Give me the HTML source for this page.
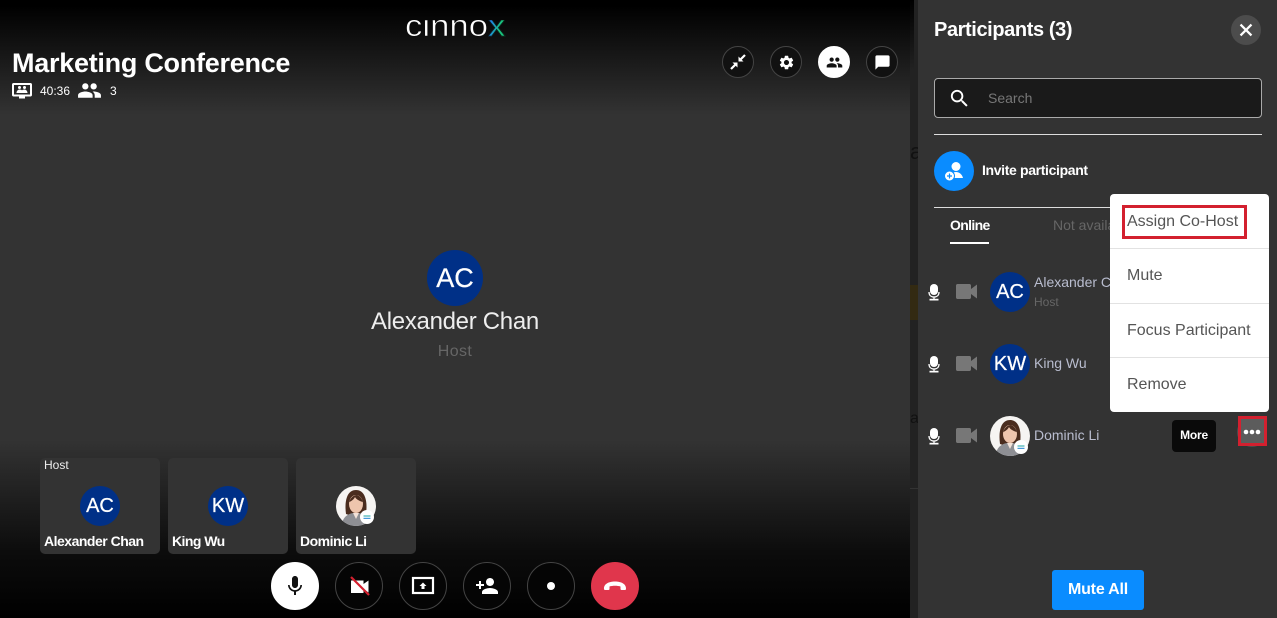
<!DOCTYPE html>
<html lang="en"><head><meta charset="utf-8"><title>Marketing Conference</title>
<style>
*{box-sizing:border-box}
html,body{margin:0;padding:0;width:1277px;height:618px;overflow:hidden;background:#333;font-family:"Liberation Sans",sans-serif}
.a{position:absolute}
.t{position:absolute;white-space:nowrap;line-height:1}
#stage{position:absolute;left:0;top:0;width:910px;height:618px;background:linear-gradient(to bottom,#000 0,#000 6px,#333 115px,#333 440px,#0c0c0c 552px,#000 618px)}
.c{position:absolute;border-radius:50%;display:flex;align-items:center;justify-content:center}
.top{width:32px;height:32px;top:46px;background:#111;border:1px solid #444}
.bot{width:48px;height:48px;top:562px;background:#050505;border:1px solid #444}
.av{background:#003087;color:#fff;width:40px;height:40px;font-size:20px;-webkit-text-stroke:.25px #fff}
.thumb{position:absolute;top:458px;width:120px;height:96px;background:#333;border-radius:5px}
.row{color:#b9bdcf;font-size:14px}
.menu{position:absolute;left:1110px;top:194px;width:159px;height:218px;background:#fff;border-radius:4px}
.menu i{position:absolute;left:0;width:100%;height:1px;background:#e2e2e2}
.menu span{position:absolute;left:17px;font-size:16px;line-height:1;color:#555;white-space:nowrap}
svg{display:block}
</style></head><body>
<div id="stage"></div>
<div class="a" style="left:910px;top:0;width:8px;height:618px;background:#222"></div>
<div class="a" style="left:910px;top:0;width:4px;height:70px;background:linear-gradient(to bottom,#000,#222)"></div>
<div class="a" style="left:910px;top:143px;width:8px;height:18px;color:#111;font-size:22px;line-height:18px;overflow:hidden">a</div>
<div class="a" style="left:910px;top:285px;width:8px;height:35px;background:#332a12"></div>
<div class="a" style="left:910px;top:411px;width:8px;height:16px;color:#111;font-size:16px;line-height:16px;overflow:hidden">a</div>
<div class="a" style="left:910px;top:488px;width:8px;height:1px;background:#333"></div>

<!-- logo -->
<div class="a" style="left:405px;top:20px;width:104px;height:18px;overflow:hidden">
<div class="t" style="left:0;top:-10px;font-size:31px;line-height:31px;color:#fff;-webkit-text-stroke:.6px #0c0c0c;transform:scaleX(1.12);transform-origin:0 0">cinno<span style="background:linear-gradient(100deg,#1e88e5 25%,#19c37d 65%);-webkit-background-clip:text;background-clip:text;color:transparent">x</span></div>
</div>

<div class="t" style="left:12px;top:47px;font-size:27px;line-height:32px;font-weight:700;color:#fff;letter-spacing:-.27px">Marketing Conference</div>

<svg class="a" style="left:12px;top:83px" width="20" height="16" viewBox="0 0 20 16"><path d="M1.500 0h17c.8 0 1.500.7 1.500 1.500v10.500c0 .8-.7 1.500-1.500 1.500H13v2H7v-2H1.500C.7 13.500 0 12.800 0 12V1.500C0 .7.700 0 1.500 0zM2 2v9.500h16V2z" fill="#fff"/><circle cx="7.500" cy="4.500" r="1.500" fill="#fff"/><circle cx="12.500" cy="4.500" r="1.500" fill="#fff"/><path d="M4.500 10c0-2 1.500-3.500 3-3.500 1 0 2 .4 2.500.9.500-.5 1.500-.9 2.500-.9 1.500 0 3 1.500 3 3.500z" fill="#fff"/></svg>
<div class="t" style="left:40px;top:85px;font-size:12px;color:#fff">40:36</div>
<svg class="a" style="left:77px;top:78px" width="25" height="25" viewBox="0 0 24 24"><path fill="#fff" d="M16 11c1.660 0 2.990-1.340 2.990-3S17.660 5 16 5c-1.660 0-3 1.340-3 3s1.340 3 3 3zm-8 0c1.660 0 2.990-1.340 2.990-3S9.660 5 8 5C6.340 5 5 6.340 5 8s1.340 3 3 3zm0 2c-2.330 0-7 1.170-7 3.500V19h14v-2.500c0-2.330-4.670-3.500-7-3.500zm8 0c-.290 0-.620.020-.970.050 1.160.840 1.970 1.970 1.970 3.450V19h6v-2.500c0-2.330-4.670-3.500-7-3.500z"/></svg>
<div class="t" style="left:110px;top:85px;font-size:12px;color:#fff">3</div>

<!-- top buttons -->
<div class="c top" style="left:722px"><svg width="18" height="18" viewBox="0 0 18 18"><path d="M16 2L11 7M2 16l5-5" stroke="#fff" stroke-width="2.200" fill="none"/><path fill="#fff" d="M9.500 8.500V3.500l5 5zM8.500 9.500v5l-5-5z"/></svg></div>
<div class="c top" style="left:770px"><svg width="17" height="17" viewBox="0 0 24 24"><path fill="#fff" d="M19.140 12.940c.040-.300.060-.610.060-.940 0-.320-.020-.640-.070-.940l2.030-1.580c.180-.140.230-.410.120-.610l-1.920-3.320c-.120-.220-.370-.290-.590-.220l-2.390.960c-.500-.380-1.030-.700-1.620-.940l-.360-2.540c-.040-.240-.240-.410-.480-.410h-3.840c-.240 0-.430.170-.470.410l-.360 2.540c-.590.240-1.130.570-1.620.940l-2.390-.960c-.220-.080-.470 0-.590.220L2.740 8.870c-.120.210-.080.470.120.610l2.030 1.580c-.050.300-.090.630-.090.940s.020.640.070.940l-2.030 1.580c-.180.140-.230.410-.120.610l1.920 3.320c.120.220.370.290.590.220l2.390-.960c.500.380 1.030.700 1.620.940l.360 2.540c.050.240.240.410.480.410h3.840c.240 0 .440-.170.470-.410l.360-2.540c.590-.240 1.130-.560 1.620-.940l2.390.960c.220.080.470 0 .590-.220l1.920-3.320c.120-.220.070-.470-.120-.610l-2.010-1.580zM12 15.600c-1.980 0-3.600-1.620-3.600-3.600s1.620-3.600 3.600-3.600 3.600 1.620 3.600 3.600-1.620 3.600-3.600 3.600z"/></svg></div>
<div class="c top" style="left:818px;background:#fff;border-color:#fff"><svg width="17" height="17" viewBox="0 0 24 24"><path fill="#111" d="M16 11c1.660 0 2.990-1.340 2.990-3S17.660 5 16 5c-1.660 0-3 1.340-3 3s1.340 3 3 3zm-8 0c1.660 0 2.990-1.340 2.990-3S9.660 5 8 5C6.340 5 5 6.340 5 8s1.340 3 3 3zm0 2c-2.330 0-7 1.170-7 3.500V19h14v-2.500c0-2.330-4.670-3.500-7-3.500zm8 0c-.290 0-.620.020-.970.050 1.160.840 1.970 1.970 1.970 3.450V19h6v-2.500c0-2.330-4.670-3.500-7-3.500z"/></svg></div>
<div class="c top" style="left:866px"><svg width="17" height="17" viewBox="0 0 24 24"><path fill="#fff" d="M20 2H4c-1.100 0-2 .9-2 2v18l4-4h14c1.100 0 2-.9 2-2V4c0-1.100-.9-2-2-2z"/></svg></div>

<!-- centre -->
<div class="c av" style="left:427px;top:250px;width:56px;height:56px;font-size:27px">AC</div>
<div class="t" style="left:255px;width:400px;text-align:center;top:310px;font-size:24px;color:#eee;letter-spacing:-.3px">Alexander Chan</div>
<div class="t" style="left:255px;width:400px;text-align:center;top:344px;font-size:16px;color:#666;letter-spacing:.4px">Host</div>

<!-- thumbs -->
<div class="thumb" style="left:40px"></div><div class="thumb" style="left:168px"></div><div class="thumb" style="left:296px"></div>
<div class="t" style="left:44px;top:459px;font-size:12px;color:#eee">Host</div>
<div class="c av" style="left:80px;top:486px">AC</div>
<div class="c av" style="left:208px;top:486px">KW</div>
<svg class="a" style="left:336px;top:486px" width="40" height="40" viewBox="0 0 40 40"><defs><clipPath id="p1"><circle cx="20" cy="20" r="20"/></clipPath></defs><g clip-path="url(#p1)"><rect width="40" height="40" fill="#f6f4f2"/><path d="M10 28C8 13 12 4 20 4s12 9 10 24l-4 1H13z" fill="#4a2c1e"/><ellipse cx="20" cy="18" rx="7" ry="9" fill="#eec5ad"/><path d="M13 16c2-5 5-7 8-7 3 1 5 4 6 7-4-1-7-3-8-5-1 2-3 4-6 5z" fill="#4a2c1e"/><path d="M6 40c0-8 5-12 11-13l3 4 3-4c6 1 11 5 11 13z" fill="#8e8f94"/><path d="M17 27l3 6 3-6z" fill="#f3e2d8"/></g><circle cx="31" cy="31" r="7" fill="#fff"/><rect x="27.500" y="29.500" width="7" height="1" fill="#1aa3a0"/><rect x="27.500" y="31.800" width="7" height="1" fill="#1a7fd0"/></svg>
<div class="t" style="left:44px;top:534px;font-size:14px;font-weight:700;color:#fff;letter-spacing:-.5px">Alexander Chan</div>
<div class="t" style="left:172px;top:534px;font-size:14px;font-weight:700;color:#fff;letter-spacing:-.55px">King Wu</div>
<div class="t" style="left:300px;top:534px;font-size:14px;font-weight:700;color:#fff;letter-spacing:-.5px">Dominic Li</div>

<!-- bottom buttons -->
<div class="c bot" style="left:271px;background:#fff;border-color:#fff"><svg width="24" height="24" viewBox="0 0 24 24"><path fill="#111" d="M12 14c1.660 0 2.990-1.340 2.990-3L15 5c0-1.660-1.340-3-3-3S9 3.340 9 5v6c0 1.660 1.340 3 3 3zm5.300-3c0 3-2.540 5.100-5.300 5.100S6.700 14 6.700 11H5c0 3.410 2.720 6.230 6 6.720V21h2v-3.280c3.280-.480 6-3.300 6-6.720h-1.700z"/></svg></div>
<div class="c bot" style="left:335px"><svg width="24" height="24" viewBox="0 0 24 24"><path fill="#fff" d="M4 6.500h12.500v3.500l5-3.500v12l-5-3.500v4H4z"/><path d="M4 3l18 18" stroke="#d3202f" stroke-width="2.200"/></svg></div>
<div class="c bot" style="left:399px"><svg width="24" height="24" viewBox="0 0 24 24"><rect x="2" y="4" width="20" height="15" fill="none" stroke="#fff" stroke-width="2.200"/><path fill="#fff" d="M12 8.500l3.500 3.500h-2v3h-3v-3h-2z"/></svg></div>
<div class="c bot" style="left:463px"><svg width="24" height="24" viewBox="0 0 24 24"><path fill="#fff" d="M15 12c2.210 0 4-1.790 4-4s-1.790-4-4-4-4 1.790-4 4 1.790 4 4 4zm-9-2V7H4v3H1v2h3v3h2v-3h3v-2H6zm9 4c-2.670 0-8 1.340-8 4v2h16v-2c0-2.660-5.330-4-8-4z"/></svg></div>
<div class="c bot" style="left:527px"><div style="width:8px;height:8px;border-radius:50%;background:#fff"></div></div>
<div class="c bot" style="left:591px;background:#e0364c;border-color:#e0364c"><svg width="24" height="24" viewBox="0 0 24 24"><path fill="#fff" d="M1 15c-.5-5 5-7.500 11-7.500S23.500 10 23 15c0 .5-.5 1-1 1h-3.500c-.5 0-1-.5-1-1v-2.500c-3-1-8-1-11 0V15c0 .5-.5 1-1 1H2c-.5 0-1-.5-1-1z"/></svg></div>

<!-- panel -->
<div class="a" style="left:918px;top:0;width:359px;height:618px;background:#333"></div>
<div class="t" style="left:934px;top:20px;font-size:20px;line-height:20px;font-weight:700;color:#fff;letter-spacing:-.4px">Participants (3)</div>
<div class="c" style="left:1231px;top:15px;width:30px;height:30px;background:#4c4c4c"><svg width="20" height="20" viewBox="0 0 24 24"><path fill="#fff" stroke="#fff" stroke-width=".7" d="M19 6.410L17.590 5 12 10.590 6.410 5 5 6.410 10.590 12 5 17.590 6.410 19 12 13.410 17.590 19 19 17.590 13.410 12 19 6.410z"/></svg></div>
<div class="a" style="left:934px;top:78px;width:328px;height:40px;background:#1a1a1a;border:1px solid #aaa;border-radius:4px"></div>
<svg class="a" style="left:948px;top:87px" width="23" height="23" viewBox="0 0 24 24"><path fill="#fff" d="M15.500 14h-.790l-.280-.270C15.410 12.590 16 11.110 16 9.500 16 5.910 13.090 3 9.500 3S3 5.910 3 9.500 5.910 16 9.500 16c1.610 0 3.090-.590 4.230-1.570l.270.280v.790l5 4.990L20.490 19l-4.990-5zm-6 0C7.010 14 5 11.990 5 9.500S7.010 5 9.500 5 14 7.010 14 9.500 11.990 14 9.500 14z"/></svg>
<div class="t" style="left:988px;top:91px;font-size:14px;color:#777">Search</div>
<div class="a" style="left:934px;top:134px;width:328px;height:1px;background:#ddd"></div>
<div class="c" style="left:934px;top:151px;width:40px;height:40px;background:#0a8cff"><svg width="26" height="26" viewBox="0 0 26 26"><circle cx="15" cy="8.500" r="4.500" fill="#fff"/><path d="M9 20c0-4 3-6 6-6s6 2 7 6z" fill="#fff"/><circle cx="8.500" cy="18" r="5" fill="#fff" stroke="#0a8cff" stroke-width="1"/><path d="M8.500 15.500v5M6 18h5" stroke="#0a8cff" stroke-width="1.200"/></svg></div>
<div class="t" style="left:982px;top:163px;font-size:14px;font-weight:700;color:#fff;letter-spacing:-.35px">Invite participant</div>
<div class="a" style="left:934px;top:207px;width:328px;height:1px;background:#ddd"></div>
<div class="t" style="left:950px;top:218px;font-size:14px;font-weight:700;color:#fff;letter-spacing:-.65px">Online</div>
<div class="a" style="left:950px;top:242px;width:39px;height:2px;background:#fff"></div>
<div class="t" style="left:1053px;top:218px;font-size:14px;color:#666">Not available</div>

<!-- rows -->
<svg class="a" style="left:925px;top:284px" width="18" height="18" viewBox="0 0 18 18"><rect x="5" y="0" width="8" height="11" rx="4" fill="#fff"/><path d="M4 8c0 3.500 2.200 5 5 5s5-1.500 5-5M9 13v2.500" fill="none" stroke="#fff" stroke-width="1.300"/><rect x="4.500" y="14.800" width="9" height="1.700" fill="#fff"/></svg>
<svg class="a" style="left:925px;top:356px" width="18" height="18" viewBox="0 0 18 18"><rect x="5" y="0" width="8" height="11" rx="4" fill="#fff"/><path d="M4 8c0 3.500 2.200 5 5 5s5-1.500 5-5M9 13v2.500" fill="none" stroke="#fff" stroke-width="1.300"/><rect x="4.500" y="14.800" width="9" height="1.700" fill="#fff"/></svg>
<svg class="a" style="left:925px;top:428px" width="18" height="18" viewBox="0 0 18 18"><rect x="5" y="0" width="8" height="11" rx="4" fill="#fff"/><path d="M4 8c0 3.500 2.200 5 5 5s5-1.500 5-5M9 13v2.500" fill="none" stroke="#fff" stroke-width="1.300"/><rect x="4.500" y="14.800" width="9" height="1.700" fill="#fff"/></svg>
<svg class="a" style="left:956px;top:284px" width="21" height="15" viewBox="0 0 21 15"><path fill="#777" d="M1.500 0h12c.8 0 1.500.7 1.500 1.500V5l6-4.500v14L15 10v3.500c0 .8-.7 1.500-1.500 1.500h-12C.7 15 0 14.300 0 13.500v-12C0 .7.700 0 1.500 0z"/></svg>
<svg class="a" style="left:956px;top:356px" width="21" height="15" viewBox="0 0 21 15"><path fill="#777" d="M1.500 0h12c.8 0 1.500.7 1.500 1.500V5l6-4.500v14L15 10v3.500c0 .8-.7 1.500-1.500 1.500h-12C.7 15 0 14.300 0 13.500v-12C0 .7.700 0 1.500 0z"/></svg>
<svg class="a" style="left:956px;top:428px" width="21" height="15" viewBox="0 0 21 15"><path fill="#777" d="M1.500 0h12c.8 0 1.500.7 1.500 1.500V5l6-4.500v14L15 10v3.500c0 .8-.7 1.500-1.500 1.500h-12C.7 15 0 14.300 0 13.500v-12C0 .7.700 0 1.500 0z"/></svg>
<div class="c av" style="left:990px;top:272px">AC</div>
<div class="c av" style="left:990px;top:344px">KW</div>
<svg class="a" style="left:990px;top:416px" width="40" height="40" viewBox="0 0 40 40"><defs><clipPath id="p2"><circle cx="20" cy="20" r="20"/></clipPath></defs><g clip-path="url(#p2)"><rect width="40" height="40" fill="#f6f4f2"/><path d="M10 28C8 13 12 4 20 4s12 9 10 24l-4 1H13z" fill="#4a2c1e"/><ellipse cx="20" cy="18" rx="7" ry="9" fill="#eec5ad"/><path d="M13 16c2-5 5-7 8-7 3 1 5 4 6 7-4-1-7-3-8-5-1 2-3 4-6 5z" fill="#4a2c1e"/><path d="M6 40c0-8 5-12 11-13l3 4 3-4c6 1 11 5 11 13z" fill="#8e8f94"/><path d="M17 27l3 6 3-6z" fill="#f3e2d8"/></g><circle cx="31" cy="31" r="7" fill="#fff"/><rect x="27.500" y="29.500" width="7" height="1" fill="#1aa3a0"/><rect x="27.500" y="31.800" width="7" height="1" fill="#1a7fd0"/></svg>
<div class="t row" style="left:1034px;top:275px">Alexander Chan</div>
<div class="t" style="left:1034px;top:296px;font-size:12px;color:#666">Host</div>
<div class="t row" style="left:1034px;top:356px">King Wu</div>
<div class="t row" style="left:1034px;top:428px">Dominic Li</div>

<!-- menu -->
<div class="menu">
<i style="top:54px"></i><i style="top:109px"></i><i style="top:163px"></i>
<div class="a" style="left:12px;top:11px;width:125px;height:34px;border:3px solid #d3202f"></div>
<span style="top:20px">Assign Co-Host</span>
<span style="top:74px">Mute</span>
<span style="top:129px">Focus Participant</span>
<span style="top:183px">Remove</span>
</div>

<div class="a" style="left:1172px;top:420px;width:44px;height:32px;background:#0a0a0a;border-radius:4px;color:#fff;font-size:12px;font-weight:700;text-align:center;line-height:30px;letter-spacing:-.2px">More</div>
<div class="a" style="left:1237px;top:417px;width:30px;height:30px;border-radius:50%;background:#4d4d4d"></div>
<div class="a" style="left:1238px;top:416px;width:29px;height:30px;border:3px solid #d3202f;background:#5c5c5c"></div>
<svg class="a" style="left:1243px;top:428px" width="18" height="8" viewBox="0 0 18 8"><circle cx="3" cy="4" r="2.300" fill="#fff"/><circle cx="9" cy="4" r="2.300" fill="#fff"/><circle cx="15" cy="4" r="2.300" fill="#fff"/></svg>

<div class="a" style="left:1052px;top:570px;width:92px;height:40px;background:#0a8cff;border-radius:3px;color:#fff;font-size:16px;font-weight:700;text-align:center;line-height:39px;letter-spacing:-.2px">Mute All</div>
</body></html>
